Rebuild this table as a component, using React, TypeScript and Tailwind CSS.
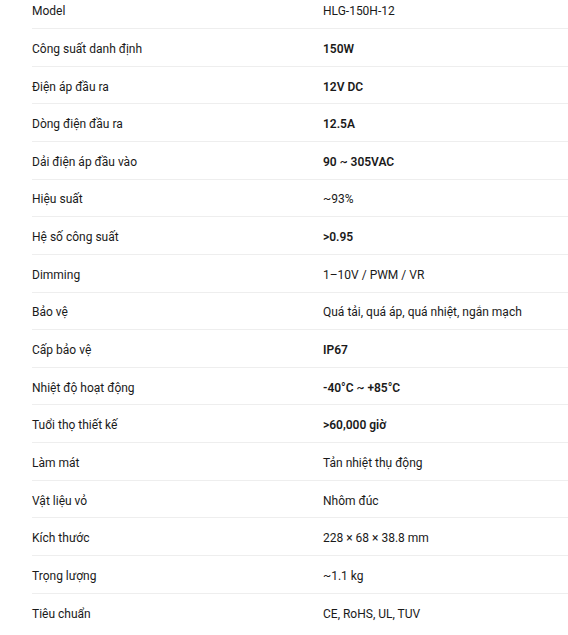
const specs: { label: string; value: string; strong?: boolean }[] = [
  { label: 'Model', value: 'HLG-150H-12' },
  { label: 'Công suất danh định', value: '150W', strong: true },
  { label: 'Điện áp đầu ra', value: '12V DC', strong: true },
  { label: 'Dòng điện đầu ra', value: '12.5A', strong: true },
  { label: 'Dải điện áp đầu vào', value: '90 ~ 305VAC', strong: true },
  { label: 'Hiệu suất', value: '~93%' },
  { label: 'Hệ số công suất', value: '>0.95', strong: true },
  { label: 'Dimming', value: '1–10V / PWM / VR' },
  { label: 'Bảo vệ', value: 'Quá tải, quá áp, quá nhiệt, ngắn mạch' },
  { label: 'Cấp bảo vệ', value: 'IP67', strong: true },
  { label: 'Nhiệt độ hoạt động', value: '-40°C ~ +85°C', strong: true },
  { label: 'Tuổi thọ thiết kế', value: '>60,000 giờ', strong: true },
  { label: 'Làm mát', value: 'Tản nhiệt thụ động' },
  { label: 'Vật liệu vỏ', value: 'Nhôm đúc' },
  { label: 'Kích thước', value: '228 × 68 × 38.8 mm' },
  { label: 'Trọng lượng', value: '~1.1 kg' },
  { label: 'Tiêu chuẩn', value: 'CE, RoHS, UL, TUV' },
];

export default function App() {
  return (
    <div className="min-h-screen bg-white overflow-hidden">
      <div className="-mt-[8.6px] pl-8 font-['Roboto',sans-serif] text-[12px] text-[#1a1a1a]">
        {specs.map((row, i) => (
          <div
            key={row.label}
            className={`grid grid-cols-[291px_1fr] items-center h-[37.65px] pt-[3px] ${
              i < specs.length - 1 ? 'border-b border-[#eeeeee]' : ''
            }`}
          >
            <span>{row.label}</span>
            <span className={row.strong ? 'font-semibold' : ''}>{row.value}</span>
          </div>
        ))}
      </div>
    </div>
  );
}
